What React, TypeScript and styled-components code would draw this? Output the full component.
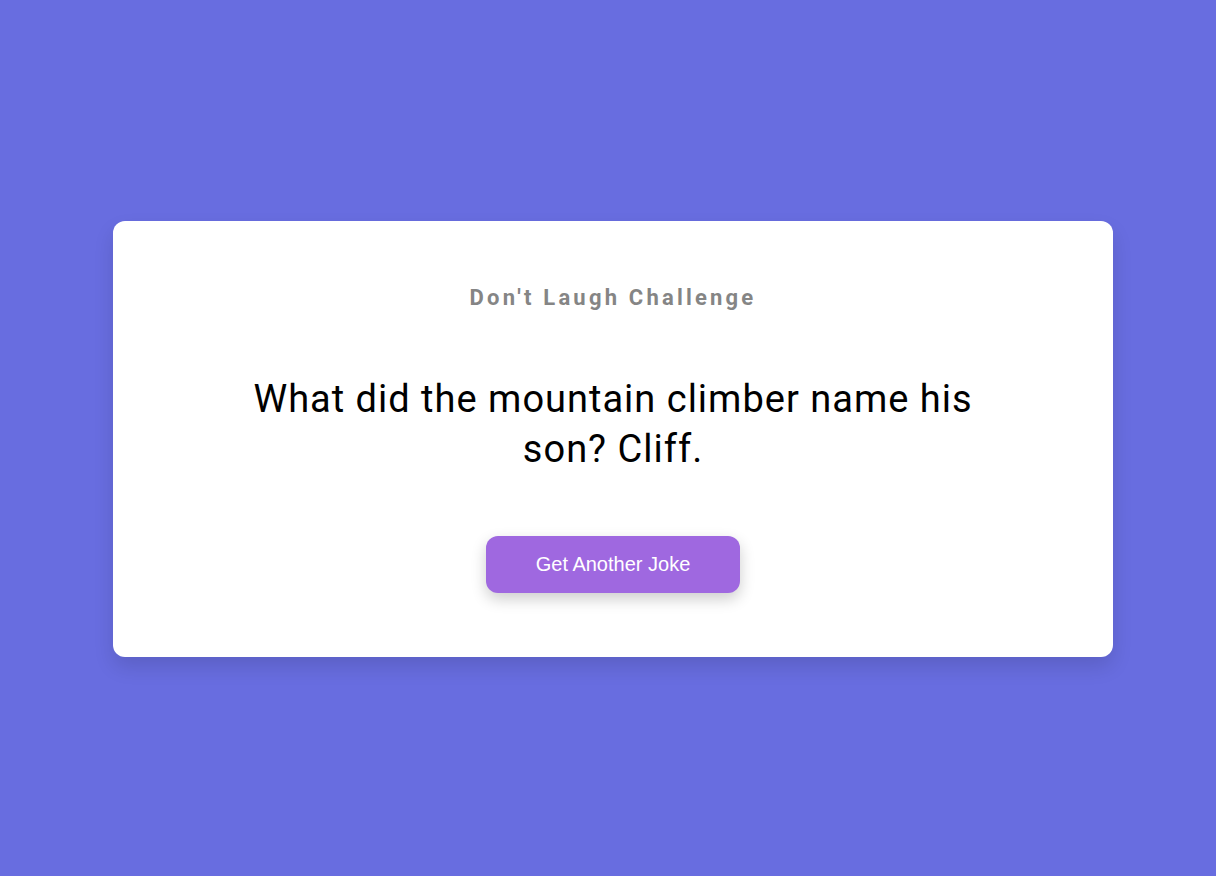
import React from "react";
import styled, { createGlobalStyle } from "styled-components";

const GlobalStyle = createGlobalStyle`
  * { box-sizing: border-box; }
  html, body { margin: 0; padding: 0; }
  body {
    background: #686de0;
    font-family: Roboto, "Noto Sans", sans-serif;
    min-height: 100vh;
  }
`;

const Page = styled.main`
  display: flex;
  align-items: center;
  justify-content: center;
  min-height: 100vh;
  padding-left: 10px;
  padding-top: 2px;
`;

const Card = styled.section`
  width: 1000px;
  background: #fff;
  border-radius: 12px;
  box-shadow: 0 10px 20px rgba(0, 0, 0, 0.12);
  padding: 64px 20px;
  display: flex;
  flex-direction: column;
  align-items: center;
  text-align: center;
`;

const Title = styled.h3`
  margin: 0;
  font-size: 22px;
  font-weight: 700;
  letter-spacing: 3.2px;
  color: #858585;
  line-height: 26px;
`;

const Joke = styled.p`
  margin: 63px auto 62px;
  max-width: 760px;
  font-size: 38px;
  line-height: 50px;
  letter-spacing: 1px;
  color: #000;
`;

const Button = styled.button`
  background: #9f68e0;
  color: #fff;
  border: 0;
  border-radius: 12px;
  box-shadow: 0 6px 15px rgba(0, 0, 0, 0.2);
  padding: 17px 50px;
  font-family: "Liberation Sans", Arial, sans-serif;
  font-size: 20px;
  line-height: 23px;
  cursor: pointer;
`;

export default function App() {
  return (
    <>
      <GlobalStyle />
      <Page>
        <Card>
          <Title>Don't Laugh Challenge</Title>
          <Joke>What did the mountain climber name his son? Cliff.</Joke>
          <Button>Get Another Joke</Button>
        </Card>
      </Page>
    </>
  );
}
